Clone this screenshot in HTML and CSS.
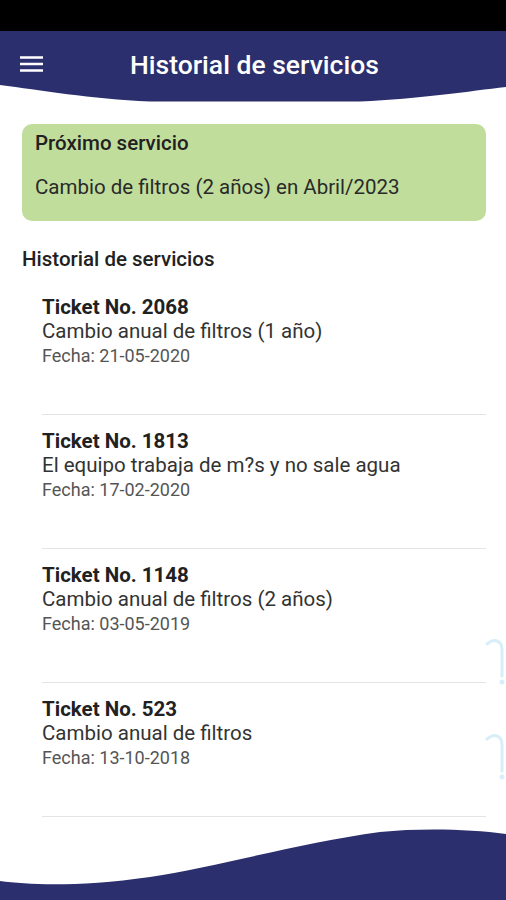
FILE: index.html
```html
<!DOCTYPE html>
<html lang="es">
<head>
    <meta charset="UTF-8">
    <meta name="viewport" content="width=device-width, initial-scale=1.0">
    <title>Historial de servicios</title>
    <link rel="stylesheet" href="styles.css">
</head>
<body>
    <div class="status-bar"></div>
    <header>
        <div class="toolbar">
            <svg class="menu-icon" width="24" height="16" viewBox="0 0 24 16">
                <path d="M0 1.5h23M0 8h23M0 14.5h23" stroke="#fff" stroke-width="2.4" fill="none"/>
            </svg>
            <h1>Historial de servicios</h1>
        </div>
        <svg class="header-curve" width="506" height="18" viewBox="0 0 506 18" preserveAspectRatio="none">
            <path d="M0 0 C40 5 90 14 150 16.5 L360 16.5 C420 14 470 6 506 2 V0 Z" fill="#2c2f6d"/>
        </svg>
    </header>

    <main>
        <section class="next-service">
            <h2>Próximo servicio</h2>
            <p>Cambio de filtros (2 años) en Abril/2023</p>
        </section>

        <h3 class="history-title">Historial de servicios</h3>
        <ul class="tickets">
            <li>
                <strong>Ticket No. 2068</strong>
                <span class="desc">Cambio anual de filtros (1 año)</span>
                <span class="date">Fecha: 21-05-2020</span>
            </li>
            <li>
                <strong>Ticket No. 1813</strong>
                <span class="desc">El equipo trabaja de m?s y no sale agua</span>
                <span class="date">Fecha: 17-02-2020</span>
            </li>
            <li>
                <strong>Ticket No. 1148</strong>
                <span class="desc">Cambio anual de filtros (2 años)</span>
                <span class="date">Fecha: 03-05-2019</span>
            </li>
            <li>
                <strong>Ticket No. 523</strong>
                <span class="desc">Cambio anual de filtros</span>
                <span class="date">Fecha: 13-10-2018</span>
            </li>
        </ul>
    </main>

    <!-- marca de agua -->
    <svg class="watermark" width="22" height="160" viewBox="0 0 22 160">
        <path d="M3 8 C10 2 18 4 18 14 V40" stroke="#d8eef8" stroke-width="3" fill="none" stroke-linecap="round"/>
        <circle cx="18" cy="46" r="2.5" fill="#d8eef8"/>
        <path d="M3 103 C10 97 18 99 18 109 V135" stroke="#d8eef8" stroke-width="3" fill="none" stroke-linecap="round"/>
        <circle cx="18" cy="141" r="2.5" fill="#d8eef8"/>
    </svg>

    <footer>
        <svg width="506" height="71" viewBox="0 0 506 71" preserveAspectRatio="none">
            <path d="M0 52 C30 56 80 58 150 48 C220 37 300 14 380 3 C420 -1 470 0 506 5 V71 H0 Z" fill="#2c2f6d"/>
        </svg>
    </footer>
</body>
</html>
```
FILE: styles.css
```css
body {
    font-family: Roboto, "Noto Sans", sans-serif;
    margin: 0;
    padding: 0;
    background: #fff;
    color: #212121;
    min-height: 900px;
    display: flex;
    flex-direction: column;
    position: relative;
    overflow: hidden;
}
.status-bar {
    height: 31px;
    background: #000;
}
header {
    display: flex;
    flex-direction: column;
}
.toolbar {
    box-sizing: border-box;
    height: 54px;
    padding: 12px 0 0 20px;
    background: #2c2f6d;
    display: flex;
    align-items: center;
}
.menu-icon {
    flex: none;
}
.toolbar h1 {
    margin: 0 0 0 86px;
    color: #fff;
    font-size: 26.5px;
    font-weight: 500;
    white-space: nowrap;
}
.header-curve {
    display: block;
}
main {
    padding: 21px 20px 0 22px;
}
.next-service {
    background: #c1dd9c;
    border-radius: 10px;
    padding: 7px 13px 22px;
}
.next-service h2 {
    margin: 0;
    font-size: 20.5px;
    font-weight: 500;
    line-height: 24px;
}
.next-service p {
    margin: 20px 0 0;
    font-size: 20.5px;
    line-height: 24px;
    color: #2a2a2a;
}
.history-title {
    margin: 27px 0 0;
    font-size: 20.5px;
    font-weight: 500;
    line-height: 22px;
}
.tickets {
    list-style: none;
    margin: 11px 0 0;
    padding: 0 0 0 20px;
}
.tickets li {
    display: flex;
    flex-direction: column;
    padding: 14px 0 45px;
    border-bottom: 1px solid #e4e4e4;
}
.tickets strong {
    font-size: 20.5px;
    font-weight: 700;
    line-height: 24px;
}
.tickets .desc {
    font-size: 20.5px;
    line-height: 24px;
    color: #333;
}
.tickets .date {
    font-size: 18px;
    line-height: 26px;
    color: #555;
}
.watermark {
    position: absolute;
    right: 0;
    top: 636px;
}
footer {
    margin-top: auto;
    line-height: 0;
}
footer svg {
    display: block;
}
```
